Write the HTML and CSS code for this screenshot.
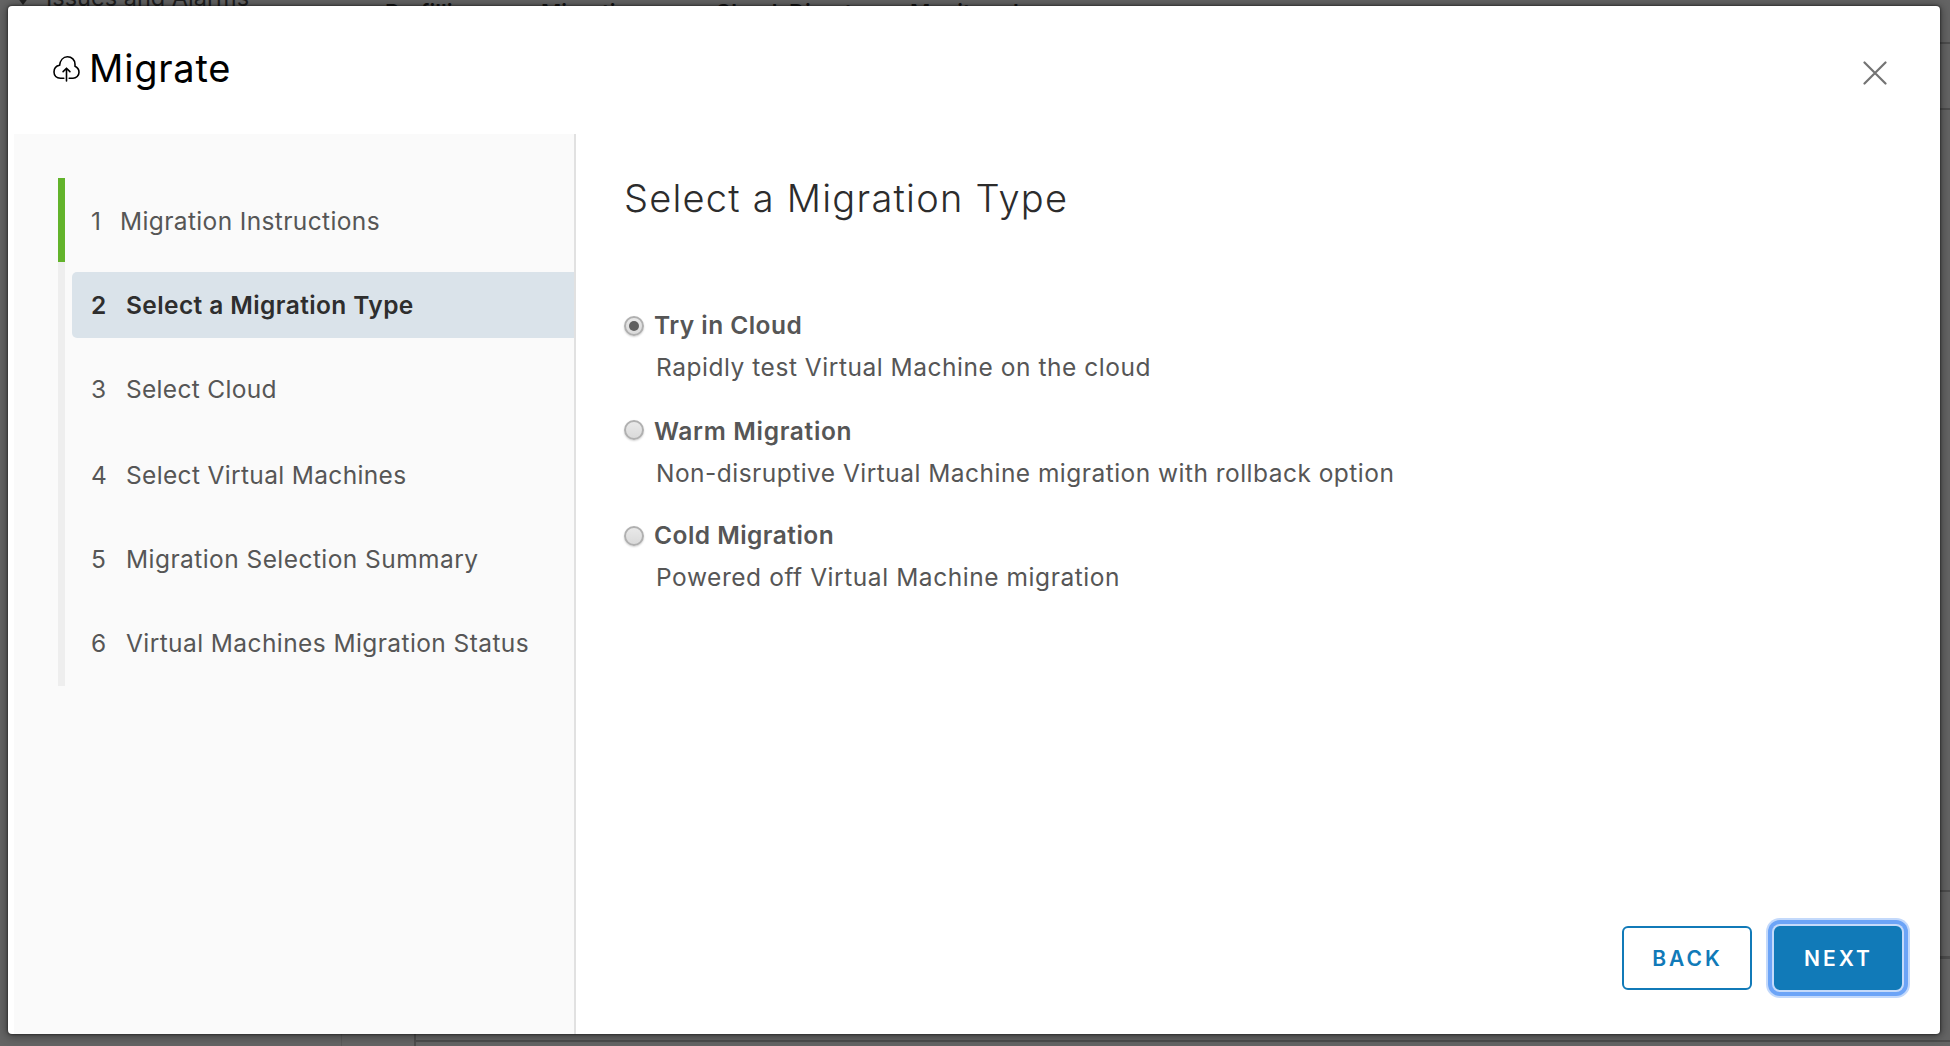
FILE: index.html
```
<!DOCTYPE html>
<html lang="en">
<head>
<meta charset="utf-8">
<title>Migrate</title>
<link rel="stylesheet" href="styles.css">
</head>
<body>
<div class="page" aria-hidden="true">
  <span class="page-caret"></span>
  <span class="page-nav">Issues and Alarms</span>
  <span class="page-word w1">Profilling</span>
  <span class="page-word w2">Migration</span>
  <span class="page-word w3">Cloud</span>
  <span class="page-word w4">Director</span>
  <span class="page-word w5">Monitored</span>
  <i class="rule r1"></i><i class="rule r2"></i><i class="rule r3"></i><i class="rule r4"></i>
  <i class="rule r5"></i><i class="rule r6"></i><i class="rule r7"></i>
</div>
<div class="modal" role="dialog">
  <header class="modal-header">
    <svg class="cloud-icon" viewBox="52 55 29 28" fill="none" stroke="#000" stroke-width="1.6" stroke-linecap="round" stroke-linejoin="round">
      <path d="M63.8 78.2H60.5C56.4 78.2 54 75.3 54 72C54 68.2 56.6 65.8 59.6 65.3C60.2 60.3 63.2 56.8 67.4 56.8C71.8 56.8 75 60 75 64.3V66.2C77.6 67.4 79 69.6 79 72.2C79 75.7 76.2 78.2 73 78.2H69.2"/>
      <path d="M66.5 81V68.4M63.1 71.6L66.5 68.2L69.9 71.6"/>
    </svg>
    <h1 class="modal-title">Migrate</h1>
    <svg class="close-icon" viewBox="0 0 24 24" fill="none" stroke="#737373" stroke-width="2.2" stroke-linecap="round"><path d="M1.5 1.5L22.5 22.5M22.5 1.5L1.5 22.5"/></svg>
  </header>
  <div class="modal-body">
    <nav class="sidebar">
      <ol class="steps">
        <li class="step done"><span class="num">1</span><span class="name s1">Migration Instructions</span></li>
        <li class="step tall active"><div class="pill"><span class="num">2</span><span class="name s2">Select a Migration Type</span></div></li>
        <li class="step tall nudge"><span class="num">3</span><span class="name s3">Select Cloud</span></li>
        <li class="step tall"><span class="num">4</span><span class="name s4">Select Virtual Machines</span></li>
        <li class="step"><span class="num">5</span><span class="name s5">Migration Selection Summary</span></li>
        <li class="step tall nudge"><span class="num">6</span><span class="name s6">Virtual Machines Migration Status</span></li>
      </ol>
    </nav>
    <main class="content">
      <h2 class="heading">Select a Migration Type</h2>
      <div class="options">
        <div class="option">
          <label class="choice t1"><span class="radio checked"></span>Try in Cloud</label>
          <p class="hint h1">Rapidly test Virtual Machine on the cloud</p>
        </div>
        <div class="option second">
          <label class="choice t2"><span class="radio raised"></span>Warm Migration</label>
          <p class="hint h2">Non-disruptive Virtual Machine migration with rollback option</p>
        </div>
        <div class="option third">
          <label class="choice t3"><span class="radio"></span>Cold Migration</label>
          <p class="hint h3">Powered off Virtual Machine migration</p>
        </div>
      </div>
      <footer class="actions">
        <button class="btn back">BACK</button>
        <button class="btn next">NEXT</button>
      </footer>
    </main>
  </div>
</div>
</body>
</html>
```
FILE: styles.css
```
* { box-sizing: border-box; }
body {
  margin: 0;
  height: 1046px;
  padding: 6px 10px 12px 8px;
  overflow: hidden;
  background: #646464;
  font-family: Inter, "Open Sans", sans-serif;
  font-size: 24.5px;
  color: #565656;
}

/* Dimmed page behind the dialog */
.page {
  position: absolute;
  inset: 0;
  overflow: hidden;
  color: #1f1f1f;
  white-space: nowrap;
}
.page span, .rule { position: absolute; }
.page-caret {
  left: 17px;
  top: -3px;
  border: 6px solid transparent;
  border-top: 8px solid #222;
  border-bottom: 0;
}
.page-nav { left: 46px; top: -17px; line-height: 30px; font-size: 23.5px; }
.page-word { top: -3px; line-height: 30px; font-size: 22px; font-weight: 600; color: #141414; }
.w1 { left: 385px; }
.w2 { left: 541px; }
.w3 { left: 715px; }
.w4 { left: 789px; }
.w5 { left: 910px; }
.rule { background: #4d4d4d; }
.r1, .r2, .r3, .r4 { left: 1940px; width: 10px; height: 2px; }
.r1 { top: 42px; }
.r2 { top: 108px; }
.r3 { top: 890px; }
.r4 { top: 956px; height: 3px; }
.r5 { left: 341px; top: 1034px; width: 1px; height: 12px; background: #5a5a5a; }
.r6 { left: 414px; top: 1034px; width: 2px; height: 12px; }
.r7 { left: 416px; right: 0; top: 1040px; height: 2px; }

.modal {
  position: relative;
  display: flex;
  flex-direction: column;
  height: 1028px;
  background: #fff;
  border-radius: 4px;
  box-shadow: 0 0 2px 1px rgba(0, 0, 0, .35), 0 1px 8px 2px rgba(0, 0, 0, .35);
}
.modal-header {
  display: flex;
  align-items: center;
  height: 128px;
  padding: 0 53px 4px 44px;
}
.cloud-icon { width: 29px; height: 28px; margin-top: 2px; }
.modal-title {
  margin: 0 auto 0 8px;
  font-size: 38px;
  font-weight: 400;
  line-height: 48px;
  letter-spacing: .8px;
  color: #000;
}
.close-icon { width: 24px; height: 24px; margin-top: 10px; }
.modal-body { display: flex; flex: 1; }

.sidebar {
  width: 562px;
  margin-left: 6px;
  padding: 44px 0 0 44px;
  background: #fafafa;
  border-right: 2px solid #e1e1e1;
}
.steps { margin: 0; padding: 0; list-style: none; }
.step {
  display: flex;
  align-items: center;
  height: 84px;
  padding-left: 26px;
  border-left: 7px solid #eee;
}
.step.tall { height: 85px; }
.step.nudge { padding-bottom: 2px; }
.step.done { border-left-color: #62b32b; padding-top: 2px; }
.step.active { padding-left: 7px; }
.pill {
  display: flex;
  align-items: center;
  flex: 1;
  height: 66px;
  padding-left: 19px;
  border-radius: 5px 0 0 5px;
  background: #dae3ea;
  color: #2e2e2e;
  font-weight: 600;
}
.num { width: 35px; }
.done .num { width: 29px; }
.name { white-space: nowrap; }
.s1 { letter-spacing: .37px; }
.s2 { letter-spacing: .4px; }
.s3 { letter-spacing: .3px; }
.s4 { letter-spacing: .34px; }
.s5 { letter-spacing: .44px; }
.s6 { letter-spacing: .41px; }

.content {
  display: flex;
  flex-direction: column;
  flex: 1;
  padding: 40px 38px 44px 48px;
}
.heading {
  margin: 0;
  font-size: 38px;
  font-weight: 300;
  line-height: 48px;
  letter-spacing: 1.23px;
  color: #2c2c2c;
}
.options { margin-top: 82px; }
.option.second { margin-top: 22px; }
.option.third { margin-top: 20px; }
.choice {
  display: flex;
  align-items: center;
  gap: 10px;
  height: 42px;
  font-weight: 600;
}
.hint { margin: 0 0 0 32px; line-height: 42px; white-space: nowrap; }
.t1 { letter-spacing: .45px; }
.t2 { letter-spacing: .68px; }
.t3 { letter-spacing: .46px; }
.h1 { letter-spacing: .53px; }
.h2 { letter-spacing: .47px; }
.h3 { letter-spacing: .56px; }
.radio {
  display: grid;
  place-items: center;
  width: 20px;
  height: 20px;
  margin-top: 2px;
  border: 2px solid #b0b0b0;
  border-radius: 50%;
  background: linear-gradient(#e9e9e9, #dadada);
  box-shadow: 0 1px 2px rgba(0, 0, 0, .18);
}
.radio.raised { margin-top: -2px; }
.radio.checked::after {
  content: "";
  width: 10px;
  height: 10px;
  border-radius: 50%;
  background: #606060;
}

.actions {
  display: flex;
  justify-content: flex-end;
  gap: 22px;
  margin-top: auto;
}
.btn {
  width: 130px;
  height: 64px;
  padding: 0 0 0 1px;
  border: 2px solid #117ab8;
  border-radius: 6px;
  background: #fff;
  color: #117ab8;
  font: 600 21px Inter, "Open Sans", sans-serif;
  letter-spacing: 3px;
}
.btn.next {
  width: 128px;
  background: #117ab8;
  color: #fff;
  box-shadow: 0 0 0 2px #c5dafa, 0 0 0 6px #6ca4f7, 0 0 0 8px #c3d9fb;
}
```
